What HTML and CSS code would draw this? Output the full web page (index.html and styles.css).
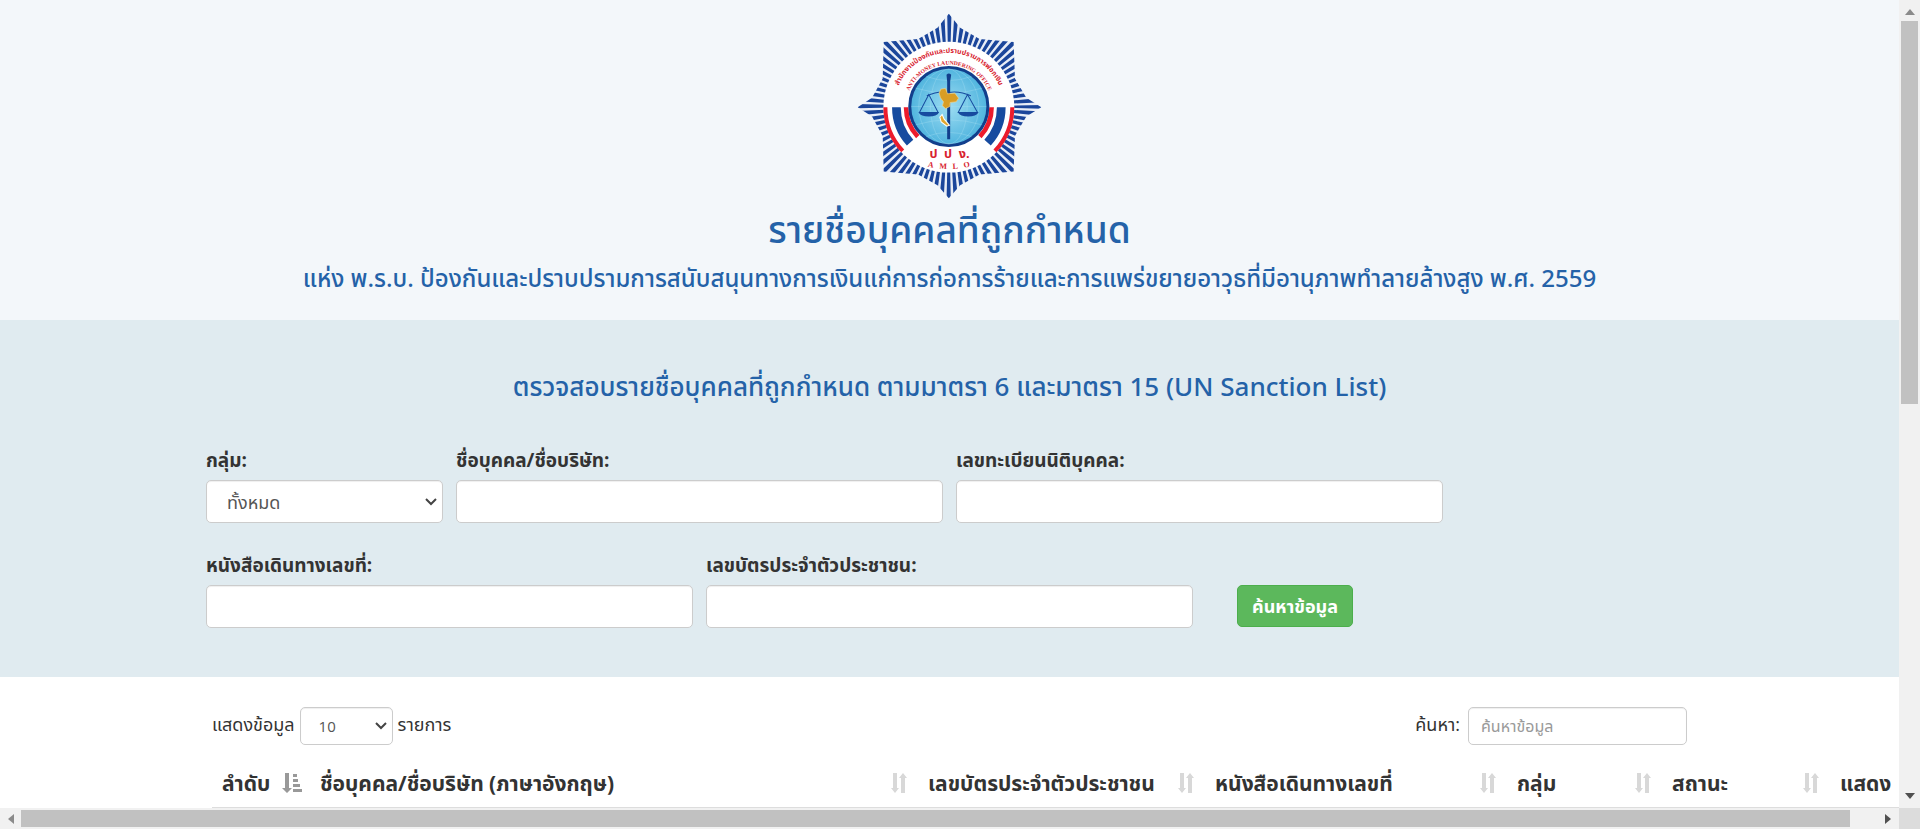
FILE: index.html
```html
<!DOCTYPE html>
<html lang="th">
<head>
<meta charset="utf-8">
<title>รายชื่อบุคคลที่ถูกกำหนด</title>
<link rel="stylesheet" href="styles.css">
</head>
<body>
<svg class="defs" aria-hidden="true">
  <symbol id="sort" viewBox="0 0 18 22"><path d="M3 1h4v15h2l-4 5-4-5h2zM11 21V6H9l4-5 4 5h-2v15z"/></symbol>
  <symbol id="sort-asc" viewBox="0 0 20 22"><path d="M3 1h4v15h3l-5 5-5-5h3zM11 2h4v3h-4zM11 7h5v3h-5zM11 12h7v3h-7zM11 17h9v3h-9z"/></symbol>
</svg>
<div class="viewport">
  <div class="page">
    <header class="masthead">
      <svg class="emblem" viewBox="50 40 560 560" role="img" aria-label="AMLO">
        <defs>
          <clipPath id="star"><path d="M328 42 362 84 420 118 522 127 526 236 560 294 605 322 560 350 526 408 522 515 420 524 362 556 328 595 294 556 236 524 133 515 130 408 98 350 55 322 98 294 130 236 133 127 236 118 294 84z"/></clipPath>
          <radialGradient id="globe"><stop offset="0" stop-color="#9ddcf2"/><stop offset="1" stop-color="#4fb4de"/></radialGradient>
          <path id="arc-th" d="M171 276A164 164 0 0 1 485 276"/>
          <path id="arc-en" d="M204 288A129 129 0 0 1 452 288"/>
          <path id="arc-amlo" d="M240 494Q328 520 416 494"/>
        </defs>
        <g clip-path="url(#star)">
          <rect x="50" y="40" width="560" height="560" fill="#e9eef7"/>
          <circle cx="328" cy="320" r="230" fill="none" stroke="#1b469b" stroke-width="140" pathLength="160" stroke-dasharray="1.2 .8" stroke-dashoffset=".6"/>
        </g>
        <circle cx="328" cy="322" r="196" fill="#fff"/>
        <g fill="none">
          <path d="M138 322A190 190 0 0 0 190 453M518 322A190 190 0 0 1 466 453" stroke="#ec1c2c" stroke-width="12"/>
          <path d="M171 322A157 157 0 0 0 212 428M485 322A157 157 0 0 1 444 428" stroke="#174b9f" stroke-width="26"/>
          <path d="M200 322A128 128 0 0 0 235 410M456 322A128 128 0 0 1 421 410" stroke="#ec1c2c" stroke-width="14"/>
        </g>
        <circle cx="328" cy="320" r="117" fill="url(#globe)" stroke="#123f8c" stroke-width="9"/>
        <g fill="none" stroke="#a9e0f3" stroke-width="1">
          <ellipse cx="328" cy="320" rx="55" ry="112"/><ellipse cx="328" cy="320" rx="90" ry="112"/>
          <path d="M228 265Q328 295 428 265M216 320H440M228 375Q328 345 428 375M260 230Q328 255 396 230M260 410Q328 385 396 410"/>
        </g>
        <g fill="none" stroke="#174b9f" stroke-width="3">
          <path d="M262 288Q296 272 326 278Q360 272 394 288"/>
          <path d="M268 284 240 338H296zM384 284 356 338H414z"/>
        </g>
        <path d="M237 337H299Q292 350 268 350T237 337M355 337H417Q410 350 386 350T355 337" fill="#174b9f"/>
        <path d="M321 225Q328 218 335 225L332 245V418H323V245z" fill="#123f8c"/>
        <path d="M304 268 318 266 324 282 346 280 357 295 350 306 332 308 331 320 318 326 309 318 312 306 303 294 299 280z" fill="#d99d25" stroke="#f1d48d" stroke-width="2"/>
        <path d="M308 344 314 358 330 376 322 379 305 366 301 352z" fill="#e2a62e" stroke="#fff" stroke-width="3"/>
        <g class="emblem-text">
          <text font-size="21"><textPath href="#arc-th" startOffset="50%">สำนักงานป้องกันและปราบปรามการฟอกเงิน</textPath></text>
          <text class="serif" font-size="17"><textPath href="#arc-en" startOffset="50%">ANTI-MONEY LAUNDERING OFFICE</textPath></text>
          <text x="330" y="474" font-size="38">ป&#160; ป&#160; ง.</text>
          <text class="serif" font-size="24"><textPath href="#arc-amlo" startOffset="50%">A&#160; &#160;M&#160; &#160;L&#160; &#160;O</textPath></text>
        </g>
      </svg>
      <h1>รายชื่อบุคคลที่ถูกกำหนด</h1>
      <p class="act">แห่ง พ.ร.บ. ป้องกันและปราบปรามการสนับสนุนทางการเงินแก่การก่อการร้ายและการแพร่ขยายอาวุธที่มีอานุภาพทำลายล้างสูง พ.ศ. 2559</p>
    </header>
    <section class="search">
      <h2>ตรวจสอบรายชื่อบุคคลที่ถูกกำหนด ตามมาตรา 6 และมาตรา 15 (UN Sanction List)</h2>
      <form class="fields">
        <div class="field narrow"><label for="group">กลุ่ม:</label><span class="select"><select id="group"><option>ทั้งหมด</option></select><svg viewBox="0 0 12 8"><path d="m1 1 5 5 5-5"/></svg></span></div>
        <div class="field"><label for="name">ชื่อบุคคล/ชื่อบริษัท:</label><input id="name" type="text"></div>
        <div class="field"><label for="reg">เลขทะเบียนนิติบุคคล:</label><input id="reg" type="text"></div>
        <div class="field first"><label for="passport">หนังสือเดินทางเลขที่:</label><input id="passport" type="text"></div>
        <div class="field"><label for="citizen">เลขบัตรประจำตัวประชาชน:</label><input id="citizen" type="text"></div>
        <button class="submit" type="button">ค้นหาข้อมูล</button>
      </form>
    </section>
    <section class="results">
      <div class="tools">
        <div class="tool"><label for="length">แสดงข้อมูล</label><span class="select small"><select id="length"><option>10</option></select><svg viewBox="0 0 12 8"><path d="m1 1 5 5 5-5"/></svg></span><span>รายการ</span></div>
        <div class="tool find"><label for="filter">ค้นหา:</label><input id="filter" type="search" placeholder="ค้นหาข้อมูล"></div>
      </div>
      <table>
        <colgroup><col class="c-no"><col class="c-name"><col class="c-id"><col class="c-pass"><col class="c-group"><col class="c-status"><col class="c-show"></colgroup>
        <thead><tr>
          <th class="sorted"><div>ลำดับ<svg><use href="#sort-asc"/></svg></div></th>
          <th><div>ชื่อบุคคล/ชื่อบริษัท (ภาษาอังกฤษ)<svg><use href="#sort"/></svg></div></th>
          <th><div>เลขบัตรประจำตัวประชาชน<svg><use href="#sort"/></svg></div></th>
          <th><div>หนังสือเดินทางเลขที่<svg><use href="#sort"/></svg></div></th>
          <th><div>กลุ่ม<svg><use href="#sort"/></svg></div></th>
          <th><div>สถานะ<svg><use href="#sort"/></svg></div></th>
          <th><div>แสดง<svg><use href="#sort"/></svg></div></th>
        </tr></thead>
      </table>
    </section>
  </div>
  <div class="vbar"><svg viewBox="0 0 10 6"><path fill="#8b8b8b" d="M0 6 5 0l5 6z"/></svg><span class="vtrack"><span class="vthumb"></span></span><svg viewBox="0 0 10 6"><path d="m0 0 5 6 5-6z"/></svg></div>
  <div class="hbar"><svg viewBox="0 0 6 10"><path fill="#8b8b8b" d="M6 0 0 5l6 5z"/></svg><span class="htrack"><span class="hthumb"></span></span><svg viewBox="0 0 6 10"><path d="m0 0 6 5-6 5z"/></svg></div>
  <div class="corner"></div>
</div>
</body>
</html>
```

FILE: styles.css
```css
* { box-sizing: border-box; }
body { margin: 0; color: #333; background: #fff; font: 18px/24px "Open Sans", "Noto Sans Thai", "Noto Sans", "Liberation Sans", sans-serif; }
.defs { display: none; }
.viewport { display: grid; grid-template: minmax(0, 1fr) 21px / minmax(0, 1fr) 21px; height: 100vh; }
.page { overflow: hidden; }

.masthead { display: flex; flex-direction: column; align-items: center; padding: 13px 0 22px; background: #f3f7fa; }
.emblem { width: 187px; height: 187px; flex: none; }
.emblem-text { fill: #d8232f; text-anchor: middle; font-weight: 700; }
.serif { font-family: "Liberation Serif", serif; }
h1, h2, .act { margin: 0; color: #2462a8; font-family: "Noto Sans Thai", "Noto Sans", sans-serif; font-weight: 500; text-align: center; white-space: nowrap; }
h1 { padding-top: 2px; font-size: 37px; line-height: 60px; }
.act { font-size: 24px; line-height: 36px; }

.search { padding: 50px 0 49px; background: #e0ebf0; }
h2 { margin-bottom: 36px; font-size: 26px; line-height: 36px; }
.fields { display: grid; grid-template-columns: repeat(12, minmax(0, 1fr)); gap: 24px 13px; width: 1487px; max-width: 100%; margin: 0 auto; }
.field { grid-column: span 4; display: flex; flex-direction: column; }
.field.narrow { grid-column: span 2; }
.field.first { grid-column: 1 / span 4; }
.field label { height: 38px; padding-top: 6px; font-size: 19px; font-weight: 700; }
input, select, button { font: inherit; color: #555; }
input, select { width: 100%; height: 43px; margin: 0; padding: 0 12px; border: 1px solid #ccc; border-radius: 5px; background: #fff; box-shadow: inset 0 1px 1px #0001; }
select { appearance: none; padding: 0 20px; }
.select { display: grid; align-items: center; }
.select > * { grid-area: 1 / 1; }
.select svg { justify-self: end; width: 12px; height: 8px; margin-right: 6px; fill: none; stroke: #444; stroke-width: 2; pointer-events: none; }
.submit { grid-column: span 3; place-self: end start; height: 42px; margin: 0 0 1px 31px; padding: 0 14px; border: 1px solid #4cae4c; border-radius: 5px; background: #5cb85c; color: #fff; font-weight: 700; }

.results { width: 1487px; max-width: 100%; margin: 0 auto; padding: 30px 6px 0; }
.tools { display: flex; justify-content: space-between; }
.tool { display: flex; gap: 5px; line-height: 34px; }
.tool input, .tool select { height: 38px; font-size: 16px; }
.tool .small { width: 93px; }
.tool .small select { padding: 0 18px; font-size: 15px; }
.find input { width: 219px; }
.find { gap: 8px; }
input::placeholder { color: #999; opacity: 1; }
table { width: 1850px; margin-top: 9px; border-collapse: collapse; table-layout: fixed; }
th { height: 54px; padding: 4px 10px 0 10px; border-bottom: 2px solid #ddd; font-size: 21px; font-weight: 700; text-align: left; white-space: nowrap; }
th div { display: flex; align-items: center; justify-content: space-between; }
th svg { width: 18px; height: 22px; flex: none; fill: #d8d8d8; }
th.sorted { padding-right: 8px; }
.sorted svg { width: 20px; fill: #999; }
.c-no { width: 98px; }
.c-name { width: 608px; }
.c-id { width: 287px; }
.c-pass { width: 302px; }
.c-group { width: 155px; }
.c-status { width: 168px; }

.vbar, .hbar { display: flex; align-items: center; justify-content: space-between; background: #f1f1f1; }
.vbar { flex-direction: column; padding: 9px 0; }
.vbar svg { width: 10px; height: 6px; fill: #505050; }
.vtrack { flex: 1; width: 17px; padding: 6px 0; }
.vthumb { display: block; height: 50%; background: #c1c1c1; }
.hbar { padding: 0 8px; }
.hbar svg { width: 6px; height: 10px; fill: #505050; }
.htrack { flex: 1; padding: 0 7px; }
.hthumb { display: block; width: 98.5%; height: 17px; background: #c1c1c1; }
.corner { background: #dcdcdc; }
```
